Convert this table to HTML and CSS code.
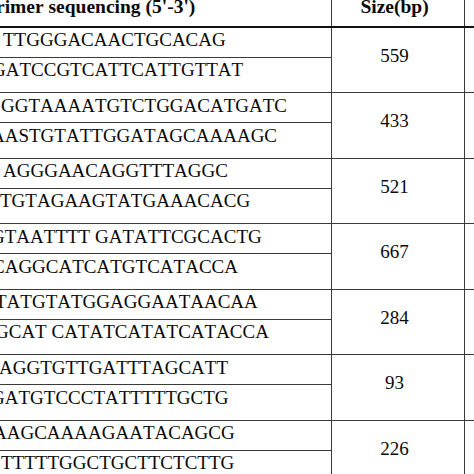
FILE: index.html
```html
<!DOCTYPE html>
<html>
<head>
<meta charset="utf-8">
<link rel="stylesheet" href="styles.css">
</head>
<body>
<div class="table">
  <div class="row head">
    <div class="c1"><span class="htext hleft">rimer sequencing (5'-3')</span></div>
    <div class="c2"><span class="htext">Size(bp)</span></div>
    <div class="c3"></div>
  </div>

  <div class="row group">
    <div class="c1">
      <div class="seq a x3">TTGGGACAACTGCACAG</div>
      <div class="seq b xm8">GATCCGTCATTCATTGTTAT</div>
    </div>
    <div class="c2 num">559</div>
    <div class="c3"></div>
  </div>

  <div class="row group">
    <div class="c1">
      <div class="seq a x1">GGTAAAATGTCTGGACATGATC</div>
      <div class="seq b xm9">AASTGTATTGGATAGCAAAAGC</div>
    </div>
    <div class="c2 num">433</div>
    <div class="c3"></div>
  </div>

  <div class="row group">
    <div class="c1">
      <div class="seq a x3">AGGGAACAGGTTTAGGC</div>
      <div class="seq b x0">TGTAGAAGTATGAAACACG</div>
    </div>
    <div class="c2 num">521</div>
    <div class="c3"></div>
  </div>

  <div class="row group">
    <div class="c1">
      <div class="seq a xm9">GTAATTTT GATATTCGCACTG</div>
      <div class="seq b xm8">CAGGCATCATGTCATACCA</div>
    </div>
    <div class="c2 num">667</div>
    <div class="c3"></div>
  </div>

  <div class="row group">
    <div class="c1">
      <div class="seq a xm5">TATGTATGGAGGAATAACAA</div>
      <div class="seq b xm5">GCAT CATATCATATCATACCA</div>
    </div>
    <div class="c2 num">284</div>
    <div class="c3"></div>
  </div>

  <div class="row group">
    <div class="c1">
      <div class="seq a xm1">AGGTGTTGATTTAGCATT</div>
      <div class="seq b xm9">GATGTCCCTATTTTTGCTG</div>
    </div>
    <div class="c2 num">93</div>
    <div class="c3"></div>
  </div>

  <div class="row group">
    <div class="c1">
      <div class="seq a xm7">AAGCAAAAGAATACAGCG</div>
      <div class="seq b x1">TTTTTGGCTGCTTCTCTTG</div>
    </div>
    <div class="c2 num">226</div>
    <div class="c3"></div>
  </div>
</div>
</body>
</html>
```

FILE: styles.css
```css
html, body {
  margin: 0;
  padding: 0;
  background: #fff;
  overflow: hidden;
}

body {
  width: 474px;
  height: 474px;
  font-family: "Liberation Serif", "Times New Roman", serif;
  font-kerning: none;
  color: #0a0a0a;
}

.table {
  display: flex;
  flex-direction: column;
  width: 474px;
}

.row {
  display: flex;
  flex-direction: row;
}

.c1 {
  box-sizing: border-box;
  width: 332px;
  flex: none;
  border-right: 1px solid #3a3a3a;
  overflow: hidden;
}

.c2 {
  box-sizing: border-box;
  width: 133px;
  flex: none;
  border-right: 1px solid #3a3a3a;
  text-align: center;
  padding-right: 7px;
}

.c3 {
  flex: 1;
}

.head {
  box-sizing: border-box;
  height: 27.5px;
  border-bottom: 2px solid #111;
}

.htext {
  display: block;
  font-weight: bold;
  font-size: 19.5px;
  line-height: 14px;
  white-space: nowrap;
}

.hleft {
  text-indent: -4px;
}

.group {
  box-sizing: border-box;
  height: 65.5px;
  border-bottom: 1px solid #3a3a3a;
}

.seq {
  box-sizing: border-box;
  font-size: 19px;
  line-height: 22px;
  padding-top: 1.5px;
  white-space: nowrap;
}

.seq.a {
  height: 30px;
  border-bottom: 1px solid #3a3a3a;
}

.seq.b {
  height: 34.5px;
}

.num {
  font-size: 19px;
  line-height: 22px;
  padding-top: 17px;
}

.x3 { text-indent: 3px; }
.x1 { text-indent: 1px; }
.x0 { text-indent: 0; }
.xm1 { text-indent: -1px; }
.xm5 { text-indent: -5px; }
.xm7 { text-indent: -7px; }
.xm8 { text-indent: -8px; }
.xm9 { text-indent: -9px; }
```
